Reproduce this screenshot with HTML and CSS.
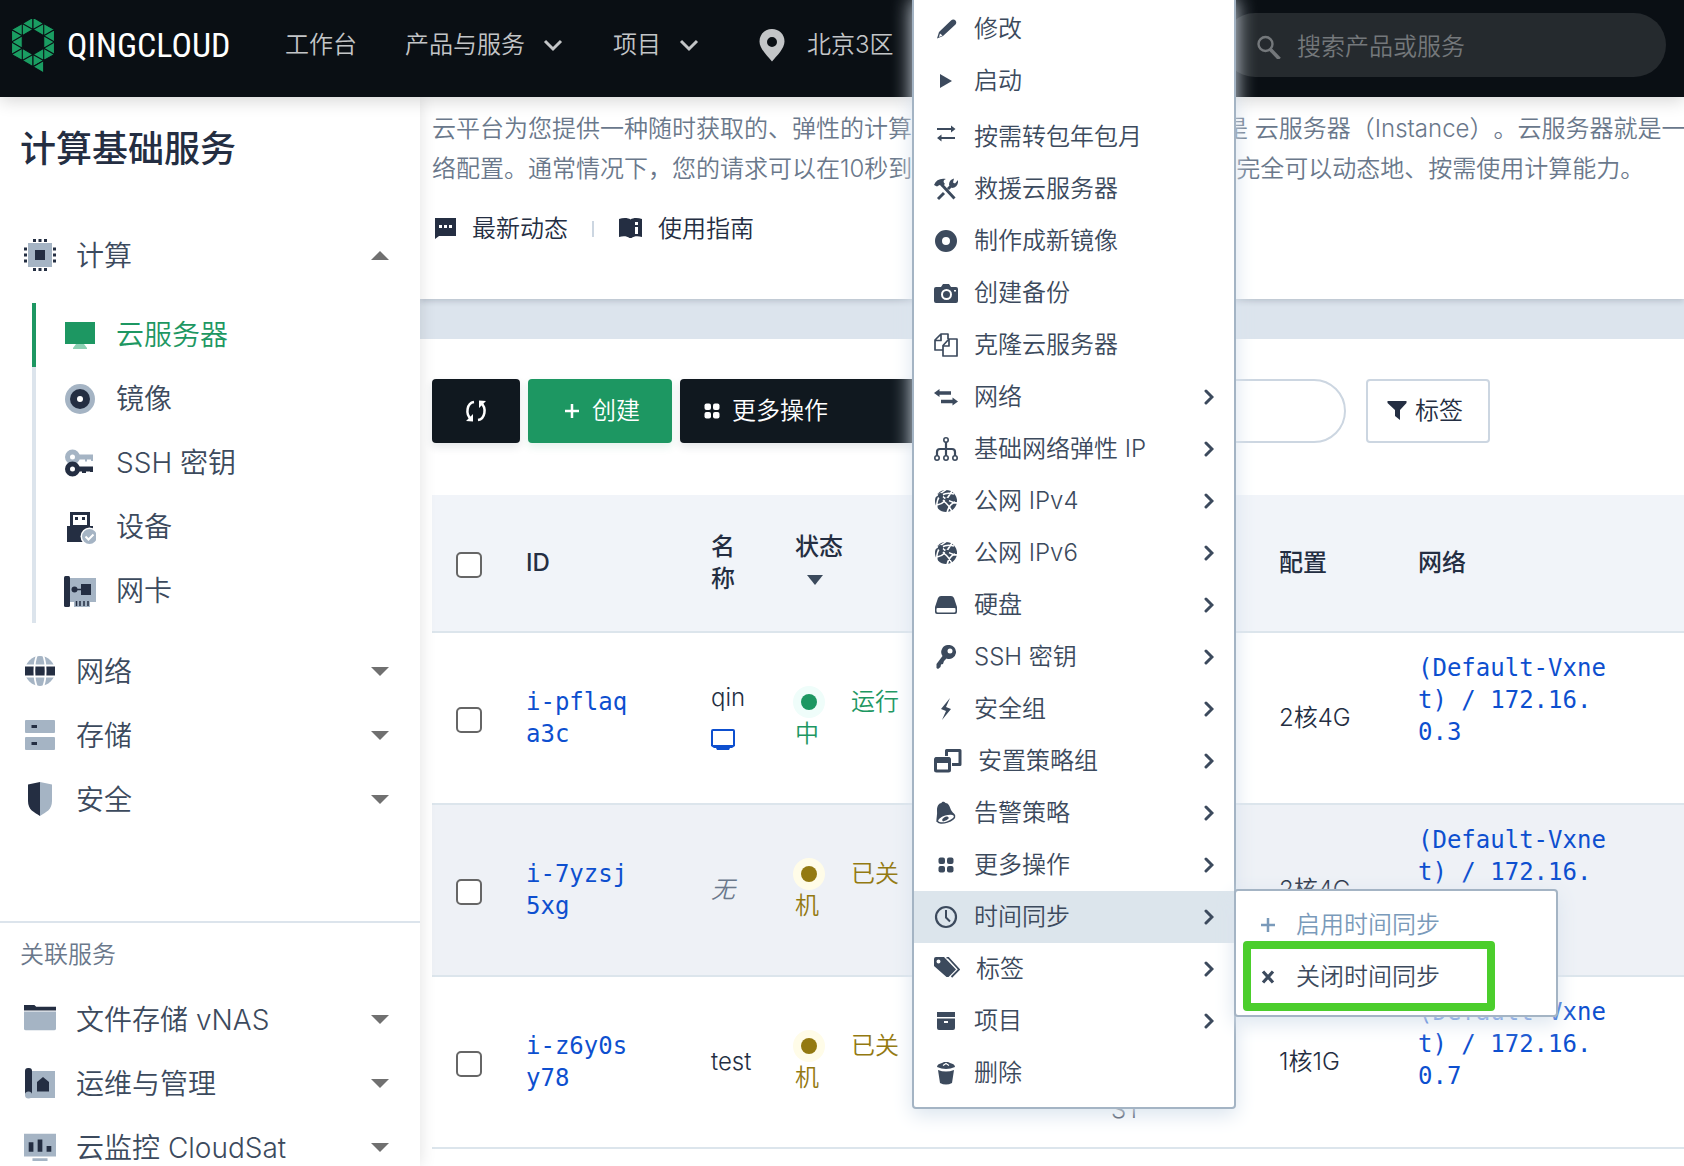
FILE: index.html
```html
<!DOCTYPE html>
<html lang="zh-CN">
<head>
<meta charset="utf-8">
<title>QingCloud 云服务器</title>
<link rel="stylesheet" href="styles.css">
</head>
<body>
<svg class="sprite" aria-hidden="true">
  <symbol id="chev-down" viewBox="0 0 24 24"><path d="M4 8l8 8 8-8" fill="none" stroke="currentColor" stroke-width="3"/></symbol>
  <symbol id="chev-right" viewBox="0 0 10 16"><path d="M2 2l6 6-6 6" fill="none" stroke="currentColor" stroke-width="3" stroke-linecap="round"/></symbol>
  <symbol id="caret-down" viewBox="0 0 18 9"><path d="M0 0h18l-9 9z" fill="currentColor"/></symbol>
  <symbol id="caret-up" viewBox="0 0 18 9"><path d="M0 9h18l-9-9z" fill="currentColor"/></symbol>
  <symbol id="sort-down" viewBox="0 0 16 10"><path d="M0 0h16l-8 10z" fill="currentColor"/></symbol>
  <symbol id="pin" viewBox="0 0 26 34"><path fill="currentColor" fill-rule="evenodd" d="M13 1C6 1 .5 6 .5 13.500 .5 20.500 8 27.500 13 33.500 18 27.500 25.500 20.500 25.500 13.500 25.500 6 20 1 13 1zm0 8a5 5 0 1 1 0 10 5 5 0 0 1 0-10z"/></symbol>
  <symbol id="search" viewBox="0 0 24 24"><circle cx="8.500" cy="9" r="7" fill="none" stroke="currentColor" stroke-width="2.400"/><path d="M13 14l9.500 10" stroke="currentColor" stroke-width="3.600"/></symbol>

  <symbol id="cpu" viewBox="0 0 32 32"><path d="M4 4h24v24H4z" fill="#a5b4c4"/><path d="M11 11h10v10H11zM9 0h3v3H9zM14.500 0h3v3h-3zM20 0h3v3h-3zM9 29h3v3H9zM14.500 29h3v3h-3zM20 29h3v3h-3zM0 8.500h3v3H0zM0 14.500h3v3H0zM0 20.500h3v3H0zM29 8.500h3v3h-3zM29 14.500h3v3h-3zM29 20.500h3v3h-3z" fill="#242e42"/></symbol>
  <symbol id="monitor" viewBox="0 0 32 32"><path d="M1 3h30v22H1z" fill="#1d9762"/><path d="M12 25h8l3 4v1H9v-1z" fill="#8bd0b2"/></symbol>
  <symbol id="disc" viewBox="0 0 32 32"><circle cx="16" cy="16" r="15" fill="#a5b4c4"/><circle cx="16" cy="16" r="10" fill="#242e42"/><circle cx="16" cy="16" r="3" fill="#fff"/></symbol>
  <symbol id="keys" viewBox="0 0 32 32"><g fill="none" stroke="#a5b4c4"><circle cx="8.500" cy="10" r="5" stroke-width="5"/><path d="M14 10h15M21 12h2M27 11.500h2" stroke-width="5"/></g><g fill="none" stroke="#242e42"><circle cx="8.500" cy="22" r="5" stroke-width="5"/><path d="M14 22h15M18 23.500h4M26 22.500h3" stroke-width="5"/></g></symbol>
  <symbol id="usb" viewBox="0 0 32 32"><path d="M6 1h20v14h3v16H3V15h3z" fill="#242e42"/><path d="M9 4h14v10H9z" fill="#fff"/><path d="M11 6h3v3h-3zM18 6h3v3h-3z" fill="#242e42"/><circle cx="25.500" cy="25.500" r="9" fill="#fff"/><circle cx="25.500" cy="25.500" r="7.500" fill="#a5b4c4"/><path d="M21.500 25.500l3 3 5-5" fill="none" stroke="#fff" stroke-width="2"/></symbol>
  <symbol id="nic" viewBox="0 0 32 32"><path d="M5 3h27v24h-6v5H10v-5H5z" fill="#a5b4c4"/><rect width="6" height="31" y="1" rx="1.500" fill="#242e42"/><path d="M17 9h10v11H17z" fill="#242e42"/><circle cx="10.500" cy="14.500" r="3" fill="#242e42"/><path d="M10 14.500h8M12.500 26v5M16 26v5M20 26v5M24 26v5" stroke="#242e42" stroke-width="1.500"/></symbol>
  <symbol id="globe" viewBox="0 0 32 32"><circle cx="16" cy="16" r="15" fill="#a5b4c4"/><path d="M1 11h30v10H1z" fill="#242e42"/><path d="M0 10.500h32M0 21.500h32M13 0C9.500 8 9.500 24 13 32M19 0c3.500 8 3.500 24 0 32" fill="none" stroke="#fff" stroke-width="1.800"/></symbol>
  <symbol id="storage" viewBox="0 0 32 32"><rect x="1" y="1" width="30" height="13" rx="1" fill="#a5b4c4"/><rect x="1" y="18" width="30" height="13" rx="1" fill="#a5b4c4"/><path d="M7.500 6H13v3H7.500zM7.500 23H13v3H7.500z" fill="#242e42"/></symbol>
  <symbol id="shield" viewBox="0 0 32 34"><path d="M16 0L4 2.500V19c0 9 6 11 12 15z" fill="#242e42"/><path d="M16 0l12 2.500V19c0 9-6 11-12 15z" fill="#a5b4c4"/></symbol>
  <symbol id="folder" viewBox="0 0 34 32"><path d="M0 8h34v18a2 2 0 0 1-2 2H2a2 2 0 0 1-2-2z" fill="#a5b4c4"/><path d="M0 1h11l2 2h21v4H0z" fill="#242e42"/></symbol>
  <symbol id="plan" viewBox="0 0 32 32"><path d="M5 4h26v27H5z" fill="#a5b4c4"/><rect x="1" y="1" width="7" height="27" rx="3" fill="#242e42"/><circle cx="4.500" cy="28" r="3.500" fill="#a5b4c4"/><path d="M13 24.500V15l6-5 6 5v9.500z" fill="#242e42"/></symbol>
  <symbol id="chart" viewBox="0 0 34 32"><path d="M0 2h34v24H0zM9 28h16v3H9z" fill="#a5b4c4"/><path d="M5 11h5v10H5zM14.500 8h5v13h-5zM24 15h5v6h-5z" fill="#242e42"/></symbol>

  <symbol id="chat" viewBox="0 0 24 24"><path fill="currentColor" fill-rule="evenodd" d="M3 1h21v18H7l-4 3zm4 7v3h3V8zm5 0v3h3V8zm5 0v3h3V8z"/></symbol>
  <symbol id="book" viewBox="0 0 24 24"><path fill="currentColor" fill-rule="evenodd" d="M1 2C5 .500 10 .500 12.500 2.500 15 .500 20 .500 24 2v18c-4-1-8-1-10.500 1h-2C9 19 5 19 1 20zm16 3v3h3V5zm0 5v7h3v-7z"/></symbol>
  <symbol id="refresh" viewBox="0 0 24 24"><path d="M10 3C3 4 1 15 7 20M14 21c7-1 9-12 3-17" fill="none" stroke="currentColor" stroke-width="2.500"/><path d="M2 22l7 .500V15zM22 2l-7-.500V9z" fill="currentColor"/></symbol>
  <symbol id="plus" viewBox="0 0 24 24"><path d="M5 12h14M12 5v14" stroke="currentColor" stroke-width="2.500"/></symbol>
  <symbol id="dots" viewBox="0 0 24 24"><g fill="currentColor"><rect x="4.500" y="4.500" width="6.500" height="6.500" rx="2"/><rect x="13" y="4.500" width="6.500" height="6.500" rx="2"/><rect x="4.500" y="13" width="6.500" height="6.500" rx="2"/><rect x="13" y="13" width="6.500" height="6.500" rx="2"/></g></symbol>
  <symbol id="funnel" viewBox="0 0 20 20"><path d="M.500 0h19v2L13 9v10l-5-4V9L.500 2z" fill="currentColor"/></symbol>
  <symbol id="screen" viewBox="0 0 24 24"><path fill="currentColor" fill-rule="evenodd" d="M2 1h20q2 0 2 2v15l-3 2h-2l-1 2H6l-1-2H3l-3-2V3q0-2 2-2zm0 2v14h20V3z"/></symbol>

  <symbol id="pencil" viewBox="0 0 24 24"><path fill="currentColor" fill-rule="evenodd" d="M17 3.500c1.500-1.500 3.500-1 4.500 0s1 3 0 4L9 19l-6 2.500L5 15zM6 16.500L5 20l3.500-1.500z"/></symbol>
  <symbol id="play" viewBox="0 0 24 24"><path d="M6 5l12 7-12 7z" fill="currentColor"/></symbol>
  <symbol id="exchange" viewBox="0 0 24 24"><path d="M3 4h16M6 13h15" stroke="currentColor" stroke-width="1.800"/><path d="M17 .500l4.500 3.500-4.500 3.500zM7.500 9.500L3 13l4.500 3.500z" fill="currentColor"/></symbol>
  <symbol id="tools" viewBox="0 0 24 24"><path d="M4 22l6-6M14 12l4-4M8 8l12.500 13.500" stroke="currentColor" stroke-width="2.900"/><path d="M0 8c2-5 6-7 12-6-3 1-3 3-1 5L8 9.500 5.500 8 3 9.500zM24 3c.500 4.500-1.500 7.500-6 8l-3-3c0-3.500 1.500-5.500 5-6.500l-1 4 2 1z" fill="currentColor"/></symbol>
  <symbol id="ring" viewBox="0 0 24 24"><circle cx="12" cy="12" r="7.500" fill="none" stroke="currentColor" stroke-width="7"/></symbol>
  <symbol id="camera" viewBox="0 0 24 24"><path fill="currentColor" d="M2 6h5l2-3h6l2 3h5a2 2 0 0 1 2 2v12a2 2 0 0 1-2 2H2a2 2 0 0 1-2-2V8a2 2 0 0 1 2-2z"/><circle cx="12.500" cy="13.500" r="4.500" fill="none" stroke="#fff" stroke-width="2"/><path d="M20 9h2v1.500h-2z" fill="#fff"/></symbol>
  <symbol id="copy" viewBox="0 0 24 24"><path d="M9 17H1V7l6-6h7v5M1 7.500h6V1M9 12.500l6-6.500h8v17H9zM9 13h6V6" fill="none" stroke="currentColor" stroke-width="1.700" stroke-linejoin="round"/></symbol>
  <symbol id="transfer" viewBox="0 0 24 24"><path d="M4 8h13M7 16.500h13" stroke="currentColor" stroke-width="3.500"/><path d="M0 8l5.500-4v8zM24 16.500l-5.500-4v8z" fill="currentColor"/></symbol>
  <symbol id="tree" viewBox="0 0 24 24"><g fill="none" stroke="currentColor" stroke-width="1.600"><circle cx="12" cy="3" r="2.200"/><circle cx="3" cy="21" r="2.200"/><circle cx="12" cy="21" r="2.200"/><circle cx="21" cy="21" r="2.200"/><path d="M12 5v14M3 19v-4q0-3 3-3h12q3 0 3 3v4" stroke-width="2.200"/></g></symbol>
  <symbol id="web" viewBox="0 0 24 24"><circle cx="12" cy="12" r="11" fill="currentColor"/><g fill="none" stroke="#fff" stroke-width="1.600"><path d="M0 8C8 4 8 4 13 0M6 5C11 10 18 14 24 14M3 21C2 14 4 8 7 6M3 16C10 15 13 10 18 2M13 24C14 19 16 15 21 13M9 11c3 3 7 6 9 12M8 6q5-3 12-1"/></g><circle cx="6.500" cy="6.500" r="2.600" fill="currentColor"/><circle cx="13" cy="11" r="2.200" fill="currentColor"/></symbol>
  <symbol id="disk" viewBox="0 0 24 24"><path fill="currentColor" fill-rule="evenodd" d="M7 3h10q2 0 3 2l3 9v5q0 2-2 2H3q-2 0-2-2v-5l3-9q1-2 3-2zM3.500 15q-1 0-1 1v2q0 1.500 1.500 1.500h16q1.500 0 1.500-1.500v-2q0-1-1-1z"/></symbol>
  <symbol id="key" viewBox="0 0 24 24"><path fill="currentColor" fill-rule="evenodd" d="M14.500 0a7 7 0 1 1-2 13.500l-2.500 2.500-1 3-2 .500-.500 2.500L4 24l-1.500-1v-4l6-8A7 7 0 0 1 14.500 0zm1.500 3.500a2.500 2.500 0 1 0 0 5 2.500 2.500 0 0 0 0-5z"/></symbol>
  <symbol id="bolt" viewBox="0 0 24 24"><path d="M16 1L7 12l5 2-4 9 9-11-5-2z" fill="currentColor"/></symbol>
  <symbol id="windows" viewBox="0 0 28 24"><g fill="none" stroke="currentColor" stroke-width="3"><path d="M12.500 7V1.500h13.500v14h-8" stroke-linejoin="round"/><rect x="1.500" y="9.500" width="14" height="12.500" rx="1"/></g><path d="M1 8.500h15v5.500H1z" fill="currentColor"/></symbol>
  <symbol id="bell" viewBox="0 0 24 24"><path d="M2.500 21C2 18 3.500 14 3 9c0-4 2-7 4.500-7 1-2 3-1 4 0 3 0 4 3 5.500 7 1 2 2.500 3 4 4.500z" fill="currentColor"/><ellipse cx="12" cy="17.500" rx="9" ry="3.800" transform="rotate(-18 12 17.500)" fill="#fff" stroke="currentColor" stroke-width="1.500"/><path d="M8 19q2-4 5.500-3.500l1.500 1.500q-2 3-6 3.500z" fill="currentColor"/></symbol>
  <symbol id="clock" viewBox="0 0 24 24"><circle cx="12" cy="12" r="10" fill="none" stroke="currentColor" stroke-width="2.200"/><path d="M12 5v7.500l4 4" fill="none" stroke="currentColor" stroke-width="2"/></symbol>
  <symbol id="tags" viewBox="0 0 26 24"><path fill="currentColor" fill-rule="evenodd" d="M2 0h8l12 12.500-7.500 7.500h-2L0 9V2q0-2 2-2zm2.500 2.500a2 2 0 1 0 0 4 2 2 0 0 0 0-4z"/><path d="M12.500 .500h1.500L25 12.500 17.500 20" fill="none" stroke="currentColor" stroke-width="1.800"/></symbol>
  <symbol id="archive" viewBox="0 0 24 24"><path fill="currentColor" fill-rule="evenodd" d="M3 3h18v5H3zm0 6.500h18V19q0 2-2 2H5q-2 0-2-2zm7 2.500v2h4v-2z"/></symbol>
  <symbol id="trash" viewBox="0 0 24 24"><path fill="currentColor" d="M4 9q8 3 16 0l-2 13q-6 3-12 0zM3 6q0-3 5-4l2-1h4l2 1q5 1 5 4-9 4-18 0z"/><path d="M9 4.500l3-2 3 2" fill="none" stroke="#fff" stroke-width="1.200"/></symbol>
  <symbol id="cross" viewBox="0 0 24 24"><path d="M7 6.500l10 11M17 6.500l-10 11" stroke="currentColor" stroke-width="3.200"/></symbol>
</svg>

<header class="topbar">
  <a class="brand" href="#">
    <svg class="brand-mark" viewBox="-22 -26 44 58" aria-hidden="true">
      <defs>
        <path id="half-ring" d="M-21.500-12.400V0l10.800-6.200zM-21.500 0v12.400L-10.700 6.200zM-10.700-18.600v12.400l-10.800-6.200zM-10.700-6.200V6.200L-21.500 0zM-10.700 6.200v12.400l-10.800-6.200zM-10.700-18.600v12.400L0-12.400zM-10.700 6.200v12.400L0 12.400zM0-24.800v12.400l-10.700-6.200zM0 12.400v12.400l-10.700-6.200z"/>
      </defs>
      <g fill="#1a9d62" stroke="#0a0f14" stroke-width="1.100">
        <use href="#half-ring"/>
        <use href="#half-ring" transform="scale(-1 1)"/>
        <path d="M0 24.800l10.700-6.200V31z"/>
      </g>
    </svg>
    <span class="brand-name">QINGCLOUD</span>
  </a>
  <nav class="topnav">
    <button type="button">工作台</button>
    <button type="button">产品与服务<svg class="i24"><use href="#chev-down"/></svg></button>
    <button type="button">项目<svg class="i24"><use href="#chev-down"/></svg></button>
    <button type="button" class="region"><svg class="pin"><use href="#pin"/></svg>北京3区<svg class="i24"><use href="#chev-down"/></svg></button>
  </nav>
  <label class="topsearch">
    <svg class="i24"><use href="#search"/></svg>
    <input type="search" placeholder="搜索产品或服务" aria-label="搜索产品或服务">
  </label>
</header>

<div class="layout">
  <aside class="sidebar">
    <h1>计算基础服务</h1>
    <nav>
      <button type="button" class="side-row"><svg class="i32"><use href="#cpu"/></svg><span>计算</span><svg class="caret"><use href="#caret-up"/></svg></button>
      <ul class="side-sub">
        <li class="active"><a href="#"><svg class="i32"><use href="#monitor"/></svg>云服务器</a></li>
        <li><a href="#"><svg class="i32"><use href="#disc"/></svg>镜像</a></li>
        <li><a href="#"><svg class="i32"><use href="#keys"/></svg>SSH 密钥</a></li>
        <li><a href="#"><svg class="i32"><use href="#usb"/></svg>设备</a></li>
        <li><a href="#"><svg class="i32"><use href="#nic"/></svg>网卡</a></li>
      </ul>
      <button type="button" class="side-row"><svg class="i32"><use href="#globe"/></svg><span>网络</span><svg class="caret"><use href="#caret-down"/></svg></button>
      <button type="button" class="side-row"><svg class="i32"><use href="#storage"/></svg><span>存储</span><svg class="caret"><use href="#caret-down"/></svg></button>
      <button type="button" class="side-row"><svg class="i32"><use href="#shield"/></svg><span>安全</span><svg class="caret"><use href="#caret-down"/></svg></button>
    </nav>
    <section class="related">
      <h2>关联服务</h2>
      <button type="button" class="side-row"><svg class="i32"><use href="#folder"/></svg><span>文件存储 vNAS</span><svg class="caret"><use href="#caret-down"/></svg></button>
      <button type="button" class="side-row"><svg class="i32"><use href="#plan"/></svg><span>运维与管理</span><svg class="caret"><use href="#caret-down"/></svg></button>
      <button type="button" class="side-row"><svg class="i32"><use href="#chart"/></svg><span>云监控 CloudSat</span><svg class="caret"><use href="#caret-down"/></svg></button>
    </section>
  </aside>

  <main class="main">
    <section class="intro">
      <p>云平台为您提供一种随时获取的、弹性的计算能力，这种计算能力的体现就是 云服务器（Instance）。云服务器就是一台配置好了的服务器，它有您期望的硬件配置、操作系统和网<br>络配置。通常情况下，您的请求可以在10秒到 60秒的时间之内完成，所以您完全可以动态地、按需使用计算能力。</p>
      <div class="intro-links">
        <a href="#"><svg class="i24"><use href="#chat"/></svg>最新动态</a>
        <span class="sep"></span>
        <a href="#"><svg class="i24"><use href="#book"/></svg>使用指南</a>
      </div>
    </section>

    <section class="panel">
      <div class="toolbar">
        <button type="button" class="btn dark refresh" aria-label="刷新"><svg class="i24"><use href="#refresh"/></svg></button>
        <button type="button" class="btn green create"><svg class="i24"><use href="#plus"/></svg>创建</button>
        <button type="button" class="btn dark more"><svg class="i24"><use href="#dots"/></svg>更多操作</button>
        <input type="search" class="filter" aria-label="搜索云服务器">
        <button type="button" class="btn tag"><svg class="i20"><use href="#funnel"/></svg>标签</button>
      </div>

      <table class="grid">
        <colgroup><col class="c-check"><col class="c-id"><col class="c-name"><col class="c-state"><col class="c-alarm"><col class="c-image"><col class="c-spec"><col></colgroup>
        <thead>
          <tr><th><input type="checkbox" aria-label="全选"></th><th>ID</th><th><span class="narrow">名称</span></th><th>状态<svg class="sort"><use href="#sort-down"/></svg></th><th></th><th></th><th>配置</th><th>网络</th></tr>
        </thead>
        <tbody>
          <tr>
            <td><input type="checkbox" aria-label="i-pflaqa3c"></td>
            <td class="mono"><a href="#">i-pflaq<br>a3c</a></td>
            <td>qin<a href="#" class="console" aria-label="控制台"><svg class="i24"><use href="#screen"/></svg></a></td>
            <td class="running"><i class="dot"></i>运行中</td>
            <td></td><td></td>
            <td>2核4G</td>
            <td class="mono net"><a href="#">(Default-Vxne<br>t) / 172.16.<br>0.3</a></td>
          </tr>
          <tr class="alt">
            <td><input type="checkbox" aria-label="i-7yzsj5xg"></td>
            <td class="mono"><a href="#">i-7yzsj<br>5xg</a></td>
            <td><em>无</em></td>
            <td class="stopped"><i class="dot"></i>已关机</td>
            <td></td><td></td>
            <td>2核4G</td>
            <td class="mono net"><a href="#">(Default-Vxne<br>t) / 172.16.<br>0.5</a></td>
          </tr>
          <tr>
            <td><input type="checkbox" aria-label="i-z6y0sy78"></td>
            <td class="mono"><a href="#">i-z6y0s<br>y78</a></td>
            <td>test</td>
            <td class="stopped"><i class="dot"></i>已关机</td>
            <td></td>
            <td class="image">CentOS<br>7.9<br>64bit<br>ST</td>
            <td>1核1G</td>
            <td class="mono net"><a href="#">(Default-Vxne<br>t) / 172.16.<br>0.7</a></td>
          </tr>
        </tbody>
      </table>
    </section>
  </main>
</div>

<div class="menu context">
  <button type="button"><svg class="i24"><use href="#pencil"/></svg>修改</button>
  <button type="button"><svg class="i24"><use href="#play"/></svg>启动</button>
  <button type="button" class="tall"><svg class="i24"><use href="#exchange"/></svg>按需转包年包月</button>
  <button type="button"><svg class="i24"><use href="#tools"/></svg>救援云服务器</button>
  <button type="button"><svg class="i24"><use href="#ring"/></svg>制作成新镜像</button>
  <button type="button"><svg class="i24"><use href="#camera"/></svg>创建备份</button>
  <button type="button"><svg class="i24"><use href="#copy"/></svg>克隆云服务器</button>
  <button type="button"><svg class="i24"><use href="#transfer"/></svg>网络<svg class="go"><use href="#chev-right"/></svg></button>
  <button type="button"><svg class="i24"><use href="#tree"/></svg>基础网络弹性 IP<svg class="go"><use href="#chev-right"/></svg></button>
  <button type="button"><svg class="i24"><use href="#web"/></svg>公网 IPv4<svg class="go"><use href="#chev-right"/></svg></button>
  <button type="button"><svg class="i24"><use href="#web"/></svg>公网 IPv6<svg class="go"><use href="#chev-right"/></svg></button>
  <button type="button"><svg class="i24"><use href="#disk"/></svg>硬盘<svg class="go"><use href="#chev-right"/></svg></button>
  <button type="button"><svg class="i24"><use href="#key"/></svg>SSH 密钥<svg class="go"><use href="#chev-right"/></svg></button>
  <button type="button"><svg class="i24"><use href="#bolt"/></svg>安全组<svg class="go"><use href="#chev-right"/></svg></button>
  <button type="button"><svg class="i28"><use href="#windows"/></svg>安置策略组<svg class="go"><use href="#chev-right"/></svg></button>
  <button type="button"><svg class="i24"><use href="#bell"/></svg>告警策略<svg class="go"><use href="#chev-right"/></svg></button>
  <button type="button"><svg class="i24"><use href="#dots"/></svg>更多操作<svg class="go"><use href="#chev-right"/></svg></button>
  <button type="button" class="open"><svg class="i24"><use href="#clock"/></svg>时间同步<svg class="go"><use href="#chev-right"/></svg></button>
  <button type="button"><svg class="i26"><use href="#tags"/></svg>标签<svg class="go"><use href="#chev-right"/></svg></button>
  <button type="button"><svg class="i24"><use href="#archive"/></svg>项目<svg class="go"><use href="#chev-right"/></svg></button>
  <button type="button"><svg class="i24"><use href="#trash"/></svg>删除</button>
</div>

<div class="menu submenu">
  <button type="button" disabled><svg class="i24"><use href="#plus"/></svg>启用时间同步</button>
  <button type="button"><svg class="i24"><use href="#cross"/></svg>关闭时间同步</button>
  <div class="highlight"></div>
</div>
</body>
</html>
```

FILE: styles.css
```css
* { box-sizing: border-box; }

body {
  position: relative;
  margin: 0;
  height: 100vh;
  overflow: hidden;
  display: flex;
  flex-direction: column;
  background: #fff;
  color: #242e42;
  font-family: Inter, "Noto Sans CJK SC", sans-serif;
  font-size: 24px;
  line-height: 32px;
  font-weight: 350;
  text-spacing-trim: space-all;
}

button, input { font: inherit; color: inherit; }
button { border: 0; padding: 0; background: none; text-align: left; cursor: pointer; }
a { color: inherit; text-decoration: none; }
svg { display: block; flex: none; }
.sprite { position: absolute; width: 0; height: 0; }
.i20 { width: 20px; height: 20px; }
.i24 { width: 24px; height: 24px; }
.i26 { width: 26px; height: 24px; }
.i28 { width: 28px; height: 24px; }
.i32 { width: 32px; height: 34px; }

/* Top bar */
.topbar {
  position: relative;
  z-index: 2;
  flex: none;
  display: flex;
  align-items: center;
  height: 97px;
  padding: 0 18px 7px 11px;
  background: #0a0f14;
  box-shadow: 0 4px 16px rgba(0, 0, 0, .16);
}
.brand { display: flex; align-items: center; gap: 12px; width: 274px; color: #fff; }
.brand-mark { width: 44px; height: 58px; }
.brand-name { font-family: "Liberation Sans Narrow", "Roboto Condensed", Roboto, sans-serif; font-size: 34px; font-weight: 400; }
.topnav { display: flex; gap: 48px; color: #c3c5c7; white-space: nowrap; }
.topnav button { display: flex; align-items: center; gap: 16px; }
.topnav .region { gap: 22px; margin-left: 10px; }
.pin { width: 26px; height: 34px; }
.topsearch {
  display: flex;
  align-items: center;
  gap: 16px;
  width: 443px;
  height: 64px;
  margin-left: auto;
  padding: 4px 34px 0;
  border-radius: 32px;
  background: #252a2e;
  color: #74787b;
}
.topsearch input { flex: 1; min-width: 0; border: 0; outline: 0; padding: 0; background: none; }
.topsearch input::placeholder { color: #74787b; opacity: 1; }

/* Frame */
.layout { flex: 1; min-height: 0; display: flex; }

/* Sidebar */
.sidebar {
  position: relative;
  z-index: 1;
  flex: none;
  width: 420px;
  padding-top: 30px;
  background: #fff;
  box-shadow: 0 0 16px rgba(0, 0, 0, .12);
  color: #3c4a5d;
  font-size: 28px;
}
.sidebar h1 { margin: 0 20px 52px; font-size: 36px; line-height: 44px; font-weight: 500; color: #242e42; }
.side-row { display: flex; align-items: center; gap: 20px; width: 100%; height: 64px; padding: 0 31px 0 24px; }
.side-row span { flex: 1; padding-top: 2px; }
.caret { width: 18px; height: 9px; color: #707070; }
.side-sub { margin: 16px 0 16px 32px; padding: 0; list-style: none; }
.side-sub li { border-left: 4px solid #dce4ec; }
.side-sub a { display: flex; align-items: center; gap: 20px; height: 64px; padding-left: 28px; }
.side-sub .active { border-color: #1d9762; color: #1d9762; }
.related { margin-top: 90px; padding-top: 16px; border-top: 2px solid #dce4ec; }
.related h2 { margin: 0 20px 16px; font-size: 24px; line-height: 32px; font-weight: 350; color: #6a788b; }

/* Main column */
.main { flex: 1; min-width: 0; overflow: hidden; background: #dce4ed; }
.intro {
  margin-bottom: 40px;
  padding: 12px 0 54px 12px;
  background: #fff;
  box-shadow: 0 2px 6px rgba(36, 46, 66, .2);
}
.intro p { margin: 0 0 24px; line-height: 40px; color: #6a788b; white-space: nowrap; }
.intro-links { display: flex; align-items: center; gap: 24px; }
.intro-links a { display: flex; align-items: center; gap: 16px; }
.sep { width: 2px; height: 16px; background: #ccd6e1; }
.panel { min-height: 100%; padding: 40px 0 0 12px; background: #fff; }

.toolbar { display: flex; gap: 8px; margin-bottom: 52px; }
.btn {
  flex: none;
  display: flex;
  align-items: center;
  gap: 8px;
  height: 64px;
  border-radius: 4px;
}
.dark { background: #10181f; color: #fff; box-shadow: 0 4px 8px rgba(36, 46, 66, .12); }
.green { background: #1d9762; color: #fff; box-shadow: 0 4px 8px rgba(29, 151, 98, .12); }
.refresh { width: 88px; justify-content: center; }
.create { width: 144px; padding-left: 32px; }
.more { width: 240px; padding-left: 20px; }
.filter { width: 400px; height: 64px; margin-left: 18px; border: 2px solid #ccd6e1; border-radius: 32px; background: #fff; }
.tag { width: 124px; margin-left: 12px; padding-left: 19px; border: 2px solid #ccd6e1; }

/* Instance table */
.grid { width: 100%; table-layout: fixed; border-collapse: separate; border-spacing: 0; }
.c-check { width: 70px; }
.c-id { width: 185px; }
.c-name { width: 84px; }
.c-state { width: 152px; }
.c-alarm { width: 164px; }
.c-image { width: 168px; }
.c-spec { width: 139px; }
.grid th, .grid td { padding: 0 0 0 24px; border-bottom: 2px solid #dce5ec; text-align: left; vertical-align: middle; }
.grid th { height: 138px; background: #f1f4f9; font-weight: 500; }
.grid td { height: 172px; }
.grid .alt td { background: #eef1f6; }
.grid input {
  appearance: none;
  display: block;
  width: 26px;
  height: 26px;
  margin: 4px 0 0;
  border: 2px solid #666;
  border-radius: 5px;
  background: #fff;
}
.narrow { display: block; width: 24px; }
.sort { width: 16px; height: 10px; margin: 12px 0 10px 12px; color: #3c4a5d; }
.mono { font-family: "DejaVu Sans Mono", monospace; color: #0d4fcf; }
.grid .net { padding-bottom: 36px; }
.console { display: block; margin-top: 8px; height: 32px; padding-top: 6px; color: #0d4fcf; }
.grid em { color: #6a788b; }
.grid .running, .grid .stopped { padding-right: 24px; }
.running { color: #1d9762; }
.stopped { color: #937911; }
.dot {
  display: inline-block;
  width: 16px;
  height: 16px;
  margin: 0 34px 0 6px;
  border-radius: 50%;
  background: currentColor;
  box-shadow: 0 0 0 8px #effdfa;
}
.stopped .dot { box-shadow: 0 0 0 8px #fffce8; }

/* Menus */
.menu {
  position: absolute;
  z-index: 3;
  width: 324px;
  padding: 8px 0;
  border: 2px solid #a4b4c4;
  border-radius: 4px;
  background: #fff;
  box-shadow: 0 6px 20px #dae4ee;
  color: #3c4a5d;
}
.menu button { display: flex; align-items: center; gap: 16px; width: 100%; height: 52px; padding: 0 20px; white-space: nowrap; }
.menu .tall { height: 56px; padding-top: 4px; }
.menu .open { background: #dce5ec; }
.menu button:disabled { color: #7a9aba; }
.go { width: 10px; height: 16px; margin-left: auto; }
.context { left: 912px; top: -7px; }
.submenu { left: 1234px; top: 889px; padding-bottom: 12px; }
.highlight {
  position: absolute;
  left: 7px;
  top: 50px;
  width: 252px;
  height: 70px;
  border: 8px solid #4bce2c;
  border-radius: 4px;
  pointer-events: none;
}
```
